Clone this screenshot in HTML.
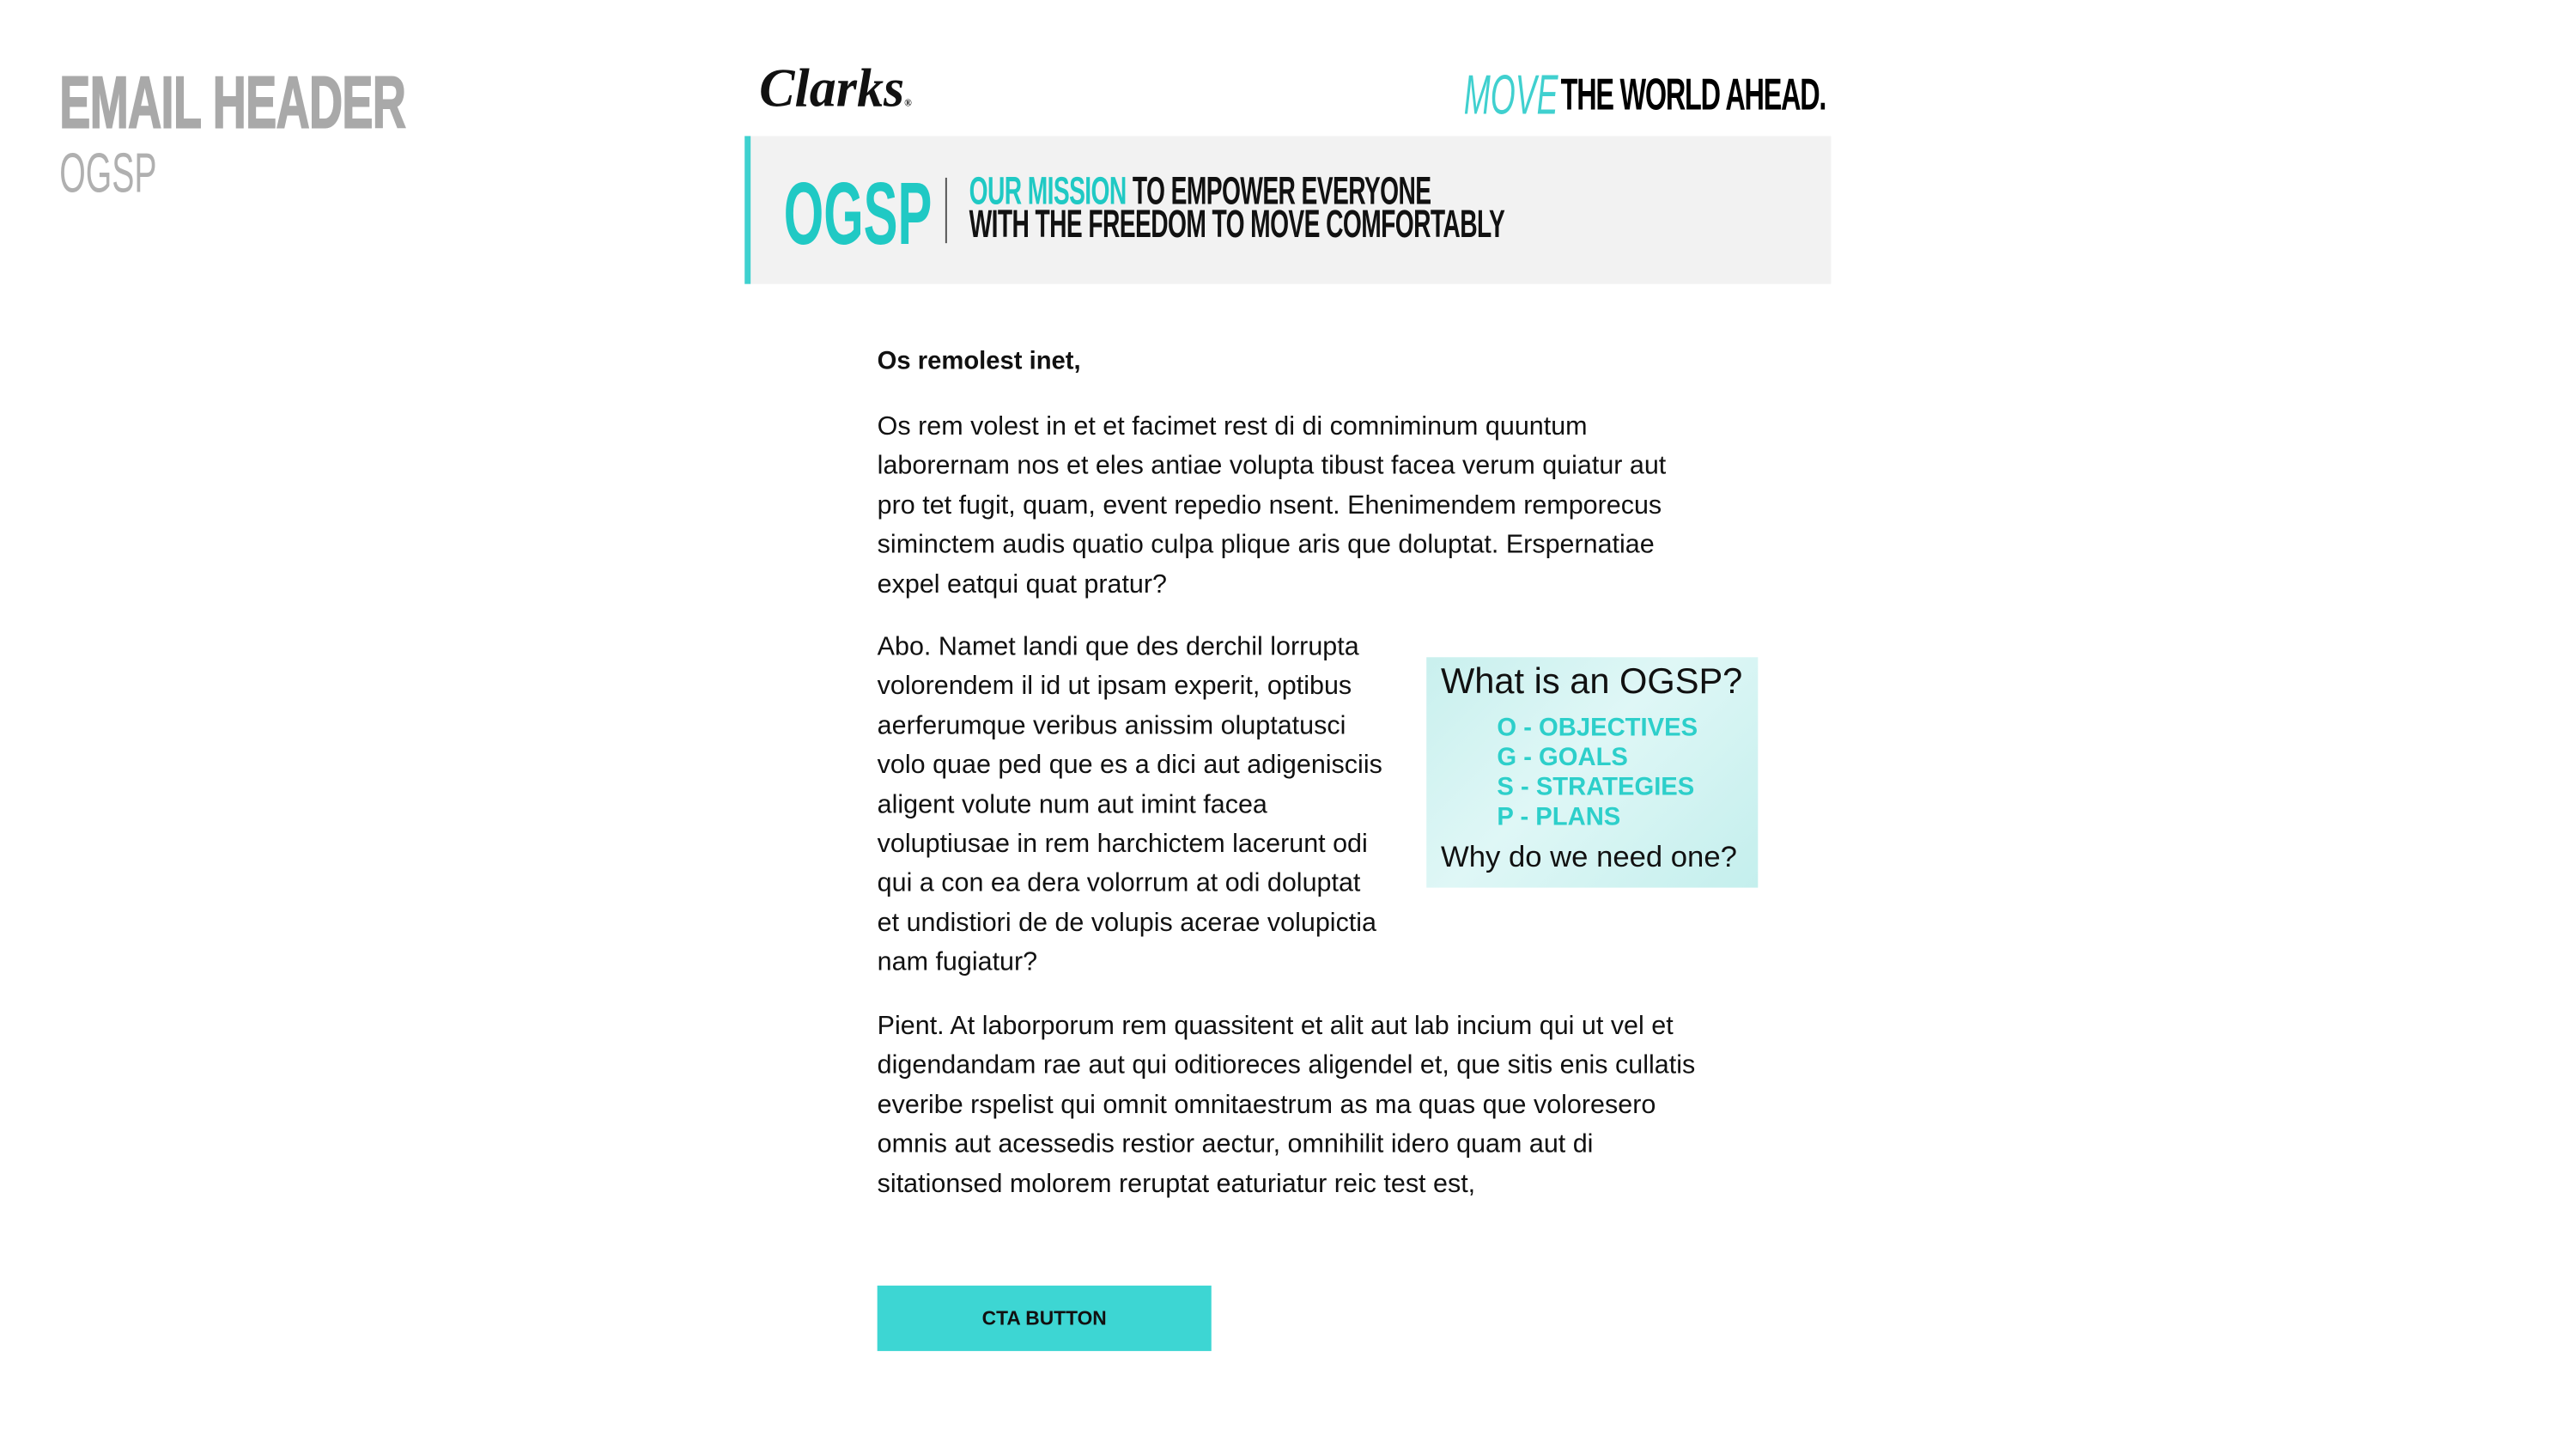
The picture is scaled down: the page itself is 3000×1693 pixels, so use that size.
<!DOCTYPE html>
<html><head><meta charset="utf-8"><style>
html,body{margin:0;padding:0;background:#fff;}
body{width:3000px;height:1688px;position:relative;overflow:hidden;font-family:"Liberation Sans",sans-serif;}
#w{position:absolute;left:0;top:0;width:3040px;height:1710px;transform:scale(0.99);transform-origin:0 0;}
.a{position:absolute;white-space:nowrap;}
.cond{transform-origin:0 0;}
.body{font-size:30.8px;color:#111;line-height:46.4px;}
</style></head><body><div id="w">
<div class="a cond" style="left:70px;top:78px;font-size:86px;font-weight:bold;color:#a9a9a9;transform:scaleX(0.635);letter-spacing:-1px;line-height:86px;-webkit-text-stroke:2px #a9a9a9;">EMAIL HEADER</div>
<div class="a cond" style="left:70px;top:170px;font-size:66px;color:#b0b0b0;transform:scaleX(0.6);line-height:66px;">OGSP</div>

<div class="a" style="left:893px;top:72px;font-family:'Liberation Serif',serif;font-style:italic;font-weight:bold;font-size:64px;color:#111;line-height:64px;transform:scaleX(0.98);transform-origin:0 0;">Clarks<span style="font-size:12px;">®</span></div>

<div class="a cond" style="left:1722px;top:78px;font-size:66px;font-style:italic;color:#40d0cf;transform:scaleX(0.57);line-height:66px;">MOVE</div>
<div class="a cond" style="left:1836px;top:86px;font-size:52px;font-weight:bold;color:#000;transform:scaleX(0.63);letter-spacing:-2px;line-height:52px;">THE WORLD AHEAD.</div>

<div class="a" style="left:876px;top:160px;width:1278px;height:174px;background:#f2f2f2;"></div>
<div class="a" style="left:876px;top:160px;width:7px;height:174px;background:#3fd1cf;"></div>
<div class="a cond" style="left:922px;top:202px;font-size:104px;font-weight:bold;color:#20c9c4;transform:scaleX(0.58);line-height:100px;">OGSP</div>
<div class="a" style="left:1112px;top:209px;width:2px;height:77px;background:#555;"></div>
<div class="a cond" style="left:1140px;top:205px;font-size:46px;font-weight:bold;color:#111;transform:scaleX(0.62);line-height:39px;letter-spacing:-1px;"><span style="color:#20c9c4;">OUR MISSION</span> TO EMPOWER EVERYONE<br>WITH THE FREEDOM TO MOVE COMFORTABLY</div>

<div class="a" style="left:1032px;top:408px;font-size:29.5px;font-weight:bold;color:#111;">Os remolest inet,</div>
<div class="a body" style="left:1032px;top:478px;">Os rem volest in et et facimet rest di di comniminum quuntum<br>laborernam nos et eles antiae volupta tibust facea verum quiatur aut<br>pro tet fugit, quam, event repedio nsent. Ehenimendem remporecus<br>siminctem audis quatio culpa plique aris que doluptat. Erspernatiae<br>expel eatqui quat pratur?</div>
<div class="a body" style="left:1032px;top:737px;">Abo. Namet landi que des derchil lorrupta<br>volorendem il id ut ipsam experit, optibus<br>aerferumque veribus anissim oluptatusci<br>volo quae ped que es a dici aut adigenisciis<br>aligent volute num aut imint facea<br>voluptiusae in rem harchictem lacerunt odi<br>qui a con ea dera volorrum at odi doluptat<br>et undistiori de de volupis acerae volupictia<br>nam fugiatur?</div>

<div class="a" style="left:1678px;top:773px;width:390px;height:271px;background:linear-gradient(135deg,#c9f0ee 0%,#dff7f6 45%,#c4efed 100%);"></div>
<div class="a" style="left:1695px;top:777px;font-size:42px;color:#111;">What is an OGSP?</div>
<div class="a" style="left:1761px;top:838px;font-size:29.5px;font-weight:bold;color:#2dcfca;line-height:35px;">O - OBJECTIVES<br>G - GOALS<br>S - STRATEGIES<br>P - PLANS</div>
<div class="a" style="left:1695px;top:988px;font-size:35px;color:#111;">Why do we need one?</div>

<div class="a body" style="left:1032px;top:1183px;">Pient. At laborporum rem quassitent et alit aut lab incium qui ut vel et<br>digendandam rae aut qui oditioreces aligendel et, que sitis enis cullatis<br>everibe rspelist qui omnit omnitaestrum as ma quas que voloresero<br>omnis aut acessedis restior aectur, omnihilit idero quam aut di<br>sitationsed molorem reruptat eaturiatur reic test est,</div>

<div class="a" style="left:1032px;top:1512px;width:393px;height:77px;background:#3dd6d3;"></div>
<div class="a" style="left:1032px;top:1537px;width:393px;text-align:center;font-size:23px;font-weight:bold;color:#111;">CTA BUTTON</div>
</div></body></html>
